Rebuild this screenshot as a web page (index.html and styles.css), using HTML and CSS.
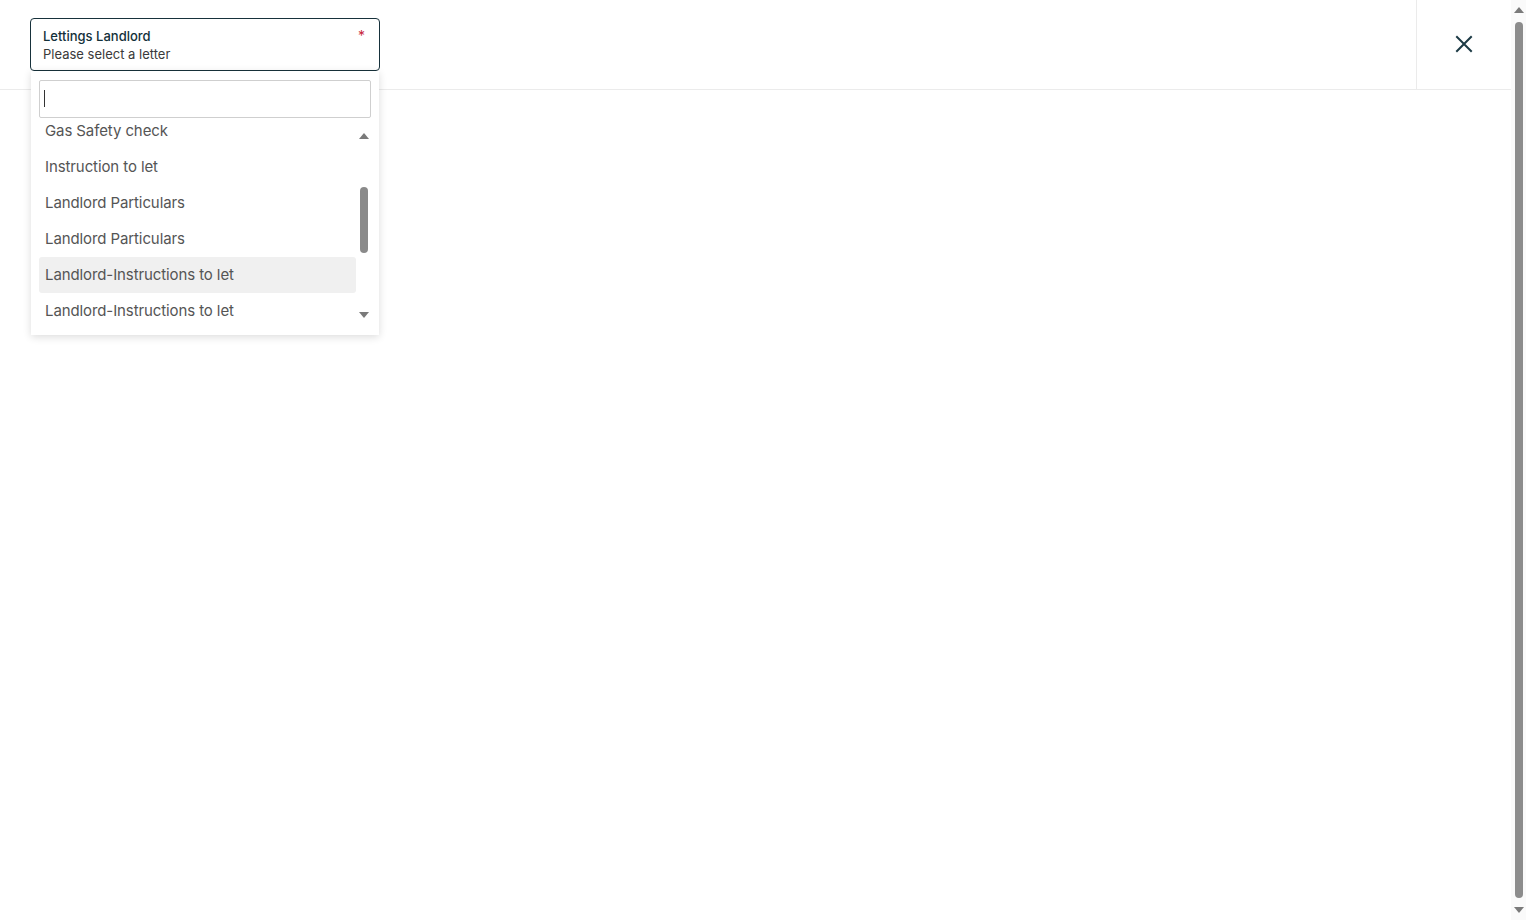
FILE: index.html
```html
<!DOCTYPE html>
<html lang="en">
<head>
  <meta charset="UTF-8">
  <meta name="viewport" content="width=device-width, initial-scale=1.0">
  <title>Select Letter</title>
  <link rel="stylesheet" href="styles.css">
</head>
<body>
  <div class="page">
    <div class="main">
      <div class="header">
        <div class="header-left">
          <div class="select-wrap">
            <div class="select-box">
              <div class="select-text">
                <div class="select-label">Lettings Landlord</div>
                <div class="select-value">Please select a letter</div>
              </div>
              <span class="required">*</span>
            </div>

            <div class="dropdown">
              <div class="search">
                <span class="caret"></span>
              </div>
              <div class="list-body">
                <div class="list-view">
                  <ul class="list">
                    <li>Gas Safety check</li>
                    <li>Instruction to let</li>
                    <li>Landlord Particulars</li>
                    <li>Landlord Particulars</li>
                    <li class="active">Landlord-Instructions to let</li>
                    <li>Landlord-Instructions to let</li>
                  </ul>
                </div>
                <div class="list-scroll">
                  <div class="arrow arrow-up"></div>
                  <div class="track"><div class="thumb"></div></div>
                  <div class="arrow arrow-down"></div>
                </div>
              </div>
            </div>
          </div>
        </div>
        <div class="header-close">
          <svg width="18" height="18" viewBox="0 0 18 18">
            <path d="M2 2 L16 16 M16 2 L2 16" stroke="#1c3a45" stroke-width="2" fill="none" stroke-linecap="square"/>
          </svg>
        </div>
      </div>
    </div>

    <div class="page-scroll">
      <div class="arrow arrow-up"></div>
      <div class="page-track"><div class="page-thumb"></div></div>
      <div class="arrow arrow-down"></div>
    </div>
  </div>
</body>
</html>
```

FILE: styles.css
```css
* {
  margin: 0;
  padding: 0;
  box-sizing: border-box;
}

body {
  font-family: Inter, "Liberation Sans", Arial, sans-serif;
  background: #fff;
  overflow: hidden;
}

.page {
  display: flex;
  height: 100vh;
}

.main {
  flex: 1;
}

.header {
  display: flex;
  height: 90px;
  border-bottom: 1px solid #ebebeb;
}

.header-left {
  flex: 1;
  padding: 18px 30px;
}

.header-close {
  width: 95px;
  border-left: 1px solid #ebebeb;
  display: flex;
  align-items: center;
  justify-content: center;
  padding-right: 1px;
  padding-bottom: 2px;
}

.select-wrap {
  position: relative;
  width: 350px;
}

.select-box {
  height: 53px;
  border: 1px solid #17313b;
  border-radius: 4px;
  padding: 8px 12px 0 12px;
  display: flex;
  justify-content: space-between;
}

.select-label {
  font-size: 13px;
  font-weight: 500;
  color: #13303a;
  line-height: 18px;
}

.select-value {
  font-size: 13px;
  color: #3a3a3a;
  line-height: 18px;
}

.required {
  color: #c8283c;
  font-size: 14px;
  line-height: 18px;
  margin-right: 2px;
}

.dropdown {
  position: absolute;
  top: 53px;
  left: 1px;
  width: 348px;
  background: #fff;
  padding: 9px 8px 6px 8px;
  box-shadow: 0 2px 8px rgba(0, 0, 0, 0.14);
  z-index: 5;
}

.search {
  height: 38px;
  border: 1px solid #cfcfcf;
  border-radius: 2px;
  padding: 9px 4px;
  margin-bottom: 4px;
}

.caret {
  display: block;
  width: 1px;
  height: 17px;
  background: #333;
}

.list-body {
  display: flex;
  height: 207px;
}

.list-view {
  flex: 1;
  overflow: hidden;
}

.list {
  list-style: none;
  margin-top: -9px;
}

.list li {
  height: 36px;
  line-height: 36px;
  padding-left: 6px;
  font-size: 15px;
  color: #555;
  border-radius: 3px;
  letter-spacing: -0.1px;
}

.list li.active {
  background: #f0f0f0;
}

.list-scroll {
  width: 15px;
  display: flex;
  flex-direction: column;
}

.list-scroll .arrow {
  height: 28px;
}

.track {
  flex: 1;
  display: flex;
  justify-content: center;
}

.thumb {
  width: 8px;
  height: 66px;
  margin-top: 37px;
  background: #8a8a8a;
  border-radius: 4px;
}

.arrow {
  display: flex;
  align-items: center;
  justify-content: center;
}

.arrow::after {
  content: "";
  width: 0;
  height: 0;
  border-left: 5px solid transparent;
  border-right: 5px solid transparent;
}

.arrow-up::after {
  border-bottom: 6px solid #7a7a7a;
}

.arrow-down::after {
  border-top: 6px solid #7a7a7a;
}

.page-scroll {
  width: 15px;
  display: flex;
  flex-direction: column;
  background: #fafafa;
}

.page-scroll .arrow {
  height: 20px;
}

.page-track {
  flex: 1;
  display: flex;
  justify-content: center;
  padding: 2px 0;
}

.page-thumb {
  width: 8px;
  background: #8c8c8c;
  border-radius: 4px;
}
```
